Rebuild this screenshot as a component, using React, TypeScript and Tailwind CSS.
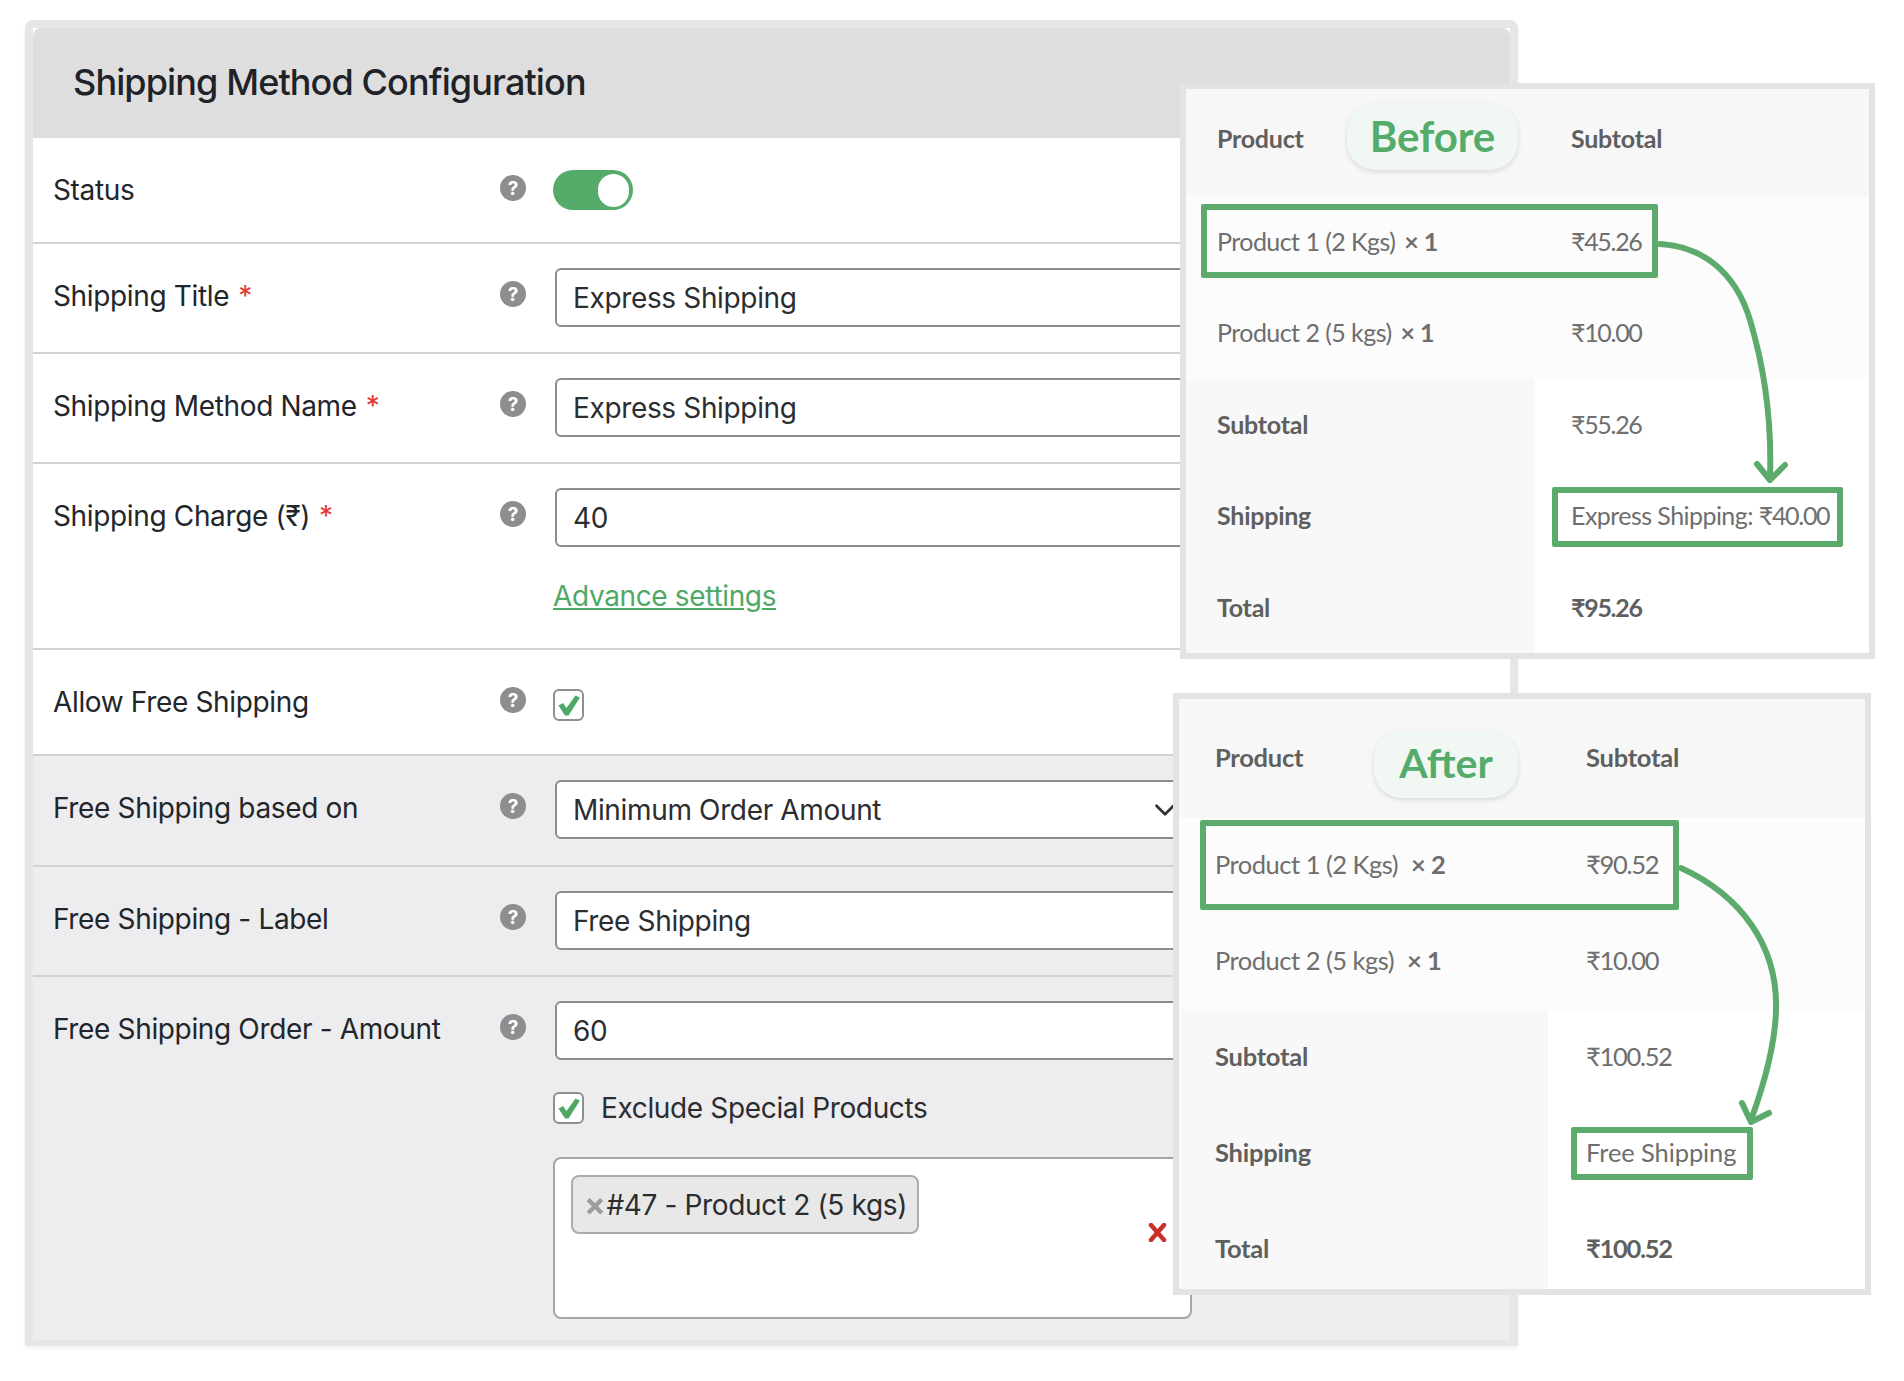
import { ChevronDown } from "lucide-react";

const HEAD_FONT = "font-['Inter','Noto_Sans',sans-serif]";
const CARD_FONT = "font-['Lato','Noto_Sans',sans-serif]";

function Help() {
  return (
    <span className="mt-[13px] flex h-[26px] w-[26px] items-center justify-center rounded-full bg-[#8e8e8e] text-[19px] leading-none font-bold text-white">
      ?
    </span>
  );
}

function Tick() {
  return (
    <svg viewBox="0 0 22 20" className="h-[21px] w-[22px]">
      <path d="M0.5 10 L5 7.5 L8.5 12.5 L17.5 0 L22 2 L10.5 20 L7 20 Z" fill="#4fa866" />
    </svg>
  );
}

function Checkbox({ className = "" }: { className?: string }) {
  return (
    <span className={`flex h-[32px] w-[31px] items-center justify-center rounded-[6px] border-2 border-[#8f8f8f] bg-white ${className}`}>
      <Tick />
    </span>
  );
}

function TextField({ value }: { value: string }) {
  return (
    <div className="ml-[2px] flex h-[59px] w-[637px] items-center rounded-[6px] border-2 border-[#8c8c8c] bg-white pl-[16px] text-[28px] tracking-[-0.35px] text-[#2b2d30]">
      {value}
    </div>
  );
}

function Row({
  label,
  required,
  gray,
  height,
  children,
}: {
  label: string;
  required?: boolean;
  gray?: boolean;
  height: string;
  children: React.ReactNode;
}) {
  return (
    <div className={`flex border-b-2 border-[#d2d2d2] pt-[24px] pl-[20px] ${height} ${gray ? "bg-[#edecee]" : "bg-white"}`}>
      <div className="mt-[8px] w-[447px] text-[28px] leading-[40px] tracking-[-0.35px] text-[#22262b]">
        {label}
        {required && <span className="ml-[9px] text-[#e53935]">*</span>}
      </div>
      <div className="w-[53px]">
        <Help />
      </div>
      <div>{children}</div>
    </div>
  );
}

function Cell({ children, bold, className = "" }: { children: React.ReactNode; bold?: boolean; className?: string }) {
  return <span className={`${bold ? "font-bold tracking-[-0.25px] text-[#5f5f5f]" : "text-[#6e6e6e]"} ${className}`}>{children}</span>;
}

function Price({ children }: { children: React.ReactNode }) {
  return <span className="tracking-[-1.3px]">{children}</span>;
}

function BeforeCard() {
  const rowCls = "flex h-[91.4px] items-center";
  return (
    <div className={`absolute top-[83px] left-[1180px] h-[576px] w-[695px] overflow-hidden border-[6px] border-[#e3e3e3] bg-white text-[25px] tracking-[-0.55px] ${CARD_FONT}`}>
      <div className="flex h-[107px] items-start bg-[#f7f7f7] pt-[31px]">
        <Cell bold className="w-[355px] pl-[31px]">Product</Cell>
        <Cell bold className="pl-[30px]">Subtotal</Cell>
      </div>
      <div className={`${rowCls} bg-[#fcfcfc]`}>
        <Cell className="w-[355px] pl-[31px]">Product 1 (2 Kgs) <b className="ml-[3px]">× 1</b></Cell>
        <Cell className="pl-[30px]"><Price>₹45.26</Price></Cell>
      </div>
      <div className={`${rowCls} bg-[#fcfcfc]`}>
        <Cell className="w-[355px] pl-[31px]">Product 2 (5 kgs) <b className="ml-[3px]">× 1</b></Cell>
        <Cell className="pl-[30px]"><Price>₹10.00</Price></Cell>
      </div>
      {[
        { name: "Subtotal", value: <Price>₹55.26</Price>, strong: false },
        { name: "Shipping", value: <>Express Shipping: <Price>₹40.00</Price></>, strong: false },
        { name: "Total", value: <Price>₹95.26</Price>, strong: true },
      ].map((row) => (
        <div key={row.name} className="flex h-[91.4px]">
          <div className="flex w-[349px] items-center bg-[#f8f8f8] pl-[31px]">
            <Cell bold>{row.name}</Cell>
          </div>
          <div className="flex items-center pl-[36px]">
            <Cell bold={row.strong}>{row.value}</Cell>
          </div>
        </div>
      ))}

      <div className="absolute top-[14px] left-[161px] flex h-[67px] w-[171px] items-center justify-center rounded-[28px] bg-[#f1f8f3] text-[42px] font-bold tracking-[0px] text-[#55ab6a] shadow-[0_2px_5px_rgba(0,0,0,0.12)]">
        Before
      </div>
      <div className="absolute top-[115px] left-[15px] h-[74px] w-[457px] rounded-[2px] border-[6px] border-[#5dab6c]" />
      <div className="absolute top-[398px] left-[366px] h-[60px] w-[291px] rounded-[2px] border-[6px] border-[#5dab6c]" />
      <svg viewBox="1186 89 683 564" className="absolute top-0 left-0 h-[564px] w-[683px]" fill="none" stroke="#5dab6c" strokeWidth="6" strokeLinecap="round" strokeLinejoin="round">
        <path d="M1660 244 C1700 246 1735 270 1750 320 C1765 370 1772 420 1770 478" />
        <path d="M1757 464 L1770 480 L1785 465" />
      </svg>
    </div>
  );
}

function AfterCard() {
  return (
    <div className={`absolute top-[693px] left-[1173px] h-[602px] w-[698px] overflow-hidden border-[6px] border-[#e3e3e3] bg-white text-[25.5px] tracking-[-0.5px] ${CARD_FONT}`}>
      <div className="flex h-[119px] items-start bg-[#f7f7f7] pt-[39px]">
        <Cell bold className="w-[407px] pl-[36px]">Product</Cell>
        <Cell bold>Subtotal</Cell>
      </div>
      <div className="flex h-[96px] items-center bg-[#fcfcfc] pb-[4px]">
        <Cell className="w-[407px] pl-[36px]">Product 1 (2 Kgs) <b className="ml-[7px]">× 2</b></Cell>
        <Cell><Price>₹90.52</Price></Cell>
      </div>
      <div className="flex h-[96px] items-center bg-[#fcfcfc] pb-[4px]">
        <Cell className="w-[407px] pl-[36px]">Product 2 (5 kgs) <b className="ml-[7px]">× 1</b></Cell>
        <Cell><Price>₹10.00</Price></Cell>
      </div>
      {[
        { name: "Subtotal", value: <Price>₹100.52</Price>, strong: false },
        { name: "Shipping", value: <span className="tracking-[-0.1px]">Free Shipping</span>, strong: false },
        { name: "Total", value: <Price>₹100.52</Price>, strong: true },
      ].map((row) => (
        <div key={row.name} className="flex h-[96px]">
          <div className="flex w-[369px] items-center bg-[#f8f8f8] pb-[4px] pl-[36px]">
            <Cell bold>{row.name}</Cell>
          </div>
          <div className="flex items-center pb-[4px] pl-[38px]">
            <Cell bold={row.strong}>{row.value}</Cell>
          </div>
        </div>
      ))}

      <div className="absolute top-[32px] left-[195px] flex h-[67px] w-[144px] items-center justify-center rounded-[28px] bg-[#f1f8f3] pb-[4px] text-[41px] font-bold tracking-[0px] text-[#55ab6a] shadow-[0_2px_5px_rgba(0,0,0,0.12)]">
        After
      </div>
      <div className="absolute top-[121px] left-[21px] h-[90px] w-[479px] rounded-[2px] border-[6px] border-[#5dab6c]" />
      <div className="absolute top-[428px] left-[392px] h-[53px] w-[182px] rounded-[2px] border-[6px] border-[#5dab6c]" />
      <svg viewBox="1179 699 686 590" className="absolute top-0 left-0 h-[590px] w-[686px]" fill="none" stroke="#5dab6c" strokeWidth="6" strokeLinecap="round" strokeLinejoin="round">
        <path d="M1681 868 C1740 895 1778 945 1776 1010 C1775 1050 1762 1090 1751 1120" />
        <path d="M1742 1103 L1751 1122 L1769 1113" />
      </svg>
    </div>
  );
}

export default function App() {
  return (
    <div className={`relative h-[1381px] w-[1904px] overflow-hidden bg-white pt-[20px] pl-[25px] ${HEAD_FONT}`}>
      <div className="h-[1326px] w-[1493px] rounded-t-[8px] border-x-[8px] border-t-[8px] border-b-[6px] border-[#e6e6e6] shadow-[0_2px_4px_rgba(0,0,0,0.06)]">
        <div className="flex h-[110px] items-center rounded-t-[8px] bg-[#dedede] pb-[2px] pl-[40px] text-[36px] font-medium tracking-[-0.88px] text-[#1f2328]">
          Shipping Method Configuration
        </div>
        <Row label="Status" height="h-[106px]">
          <div className="mt-[8px] flex h-[40px] w-[80px] items-center justify-end rounded-full bg-[#55ab6a] pr-[4px]">
            <span className="h-[33px] w-[31px] rounded-full bg-white" />
          </div>
        </Row>
        <Row label="Shipping Title" required height="h-[110px]">
          <TextField value="Express Shipping" />
        </Row>
        <Row label="Shipping Method Name" required height="h-[110px]">
          <TextField value="Express Shipping" />
        </Row>
        <Row label="Shipping Charge (₹)" required height="h-[186px]">
          <TextField value="40" />
          <a href="#" className="mt-[32px] block text-[28px] leading-[34px] tracking-[-0.35px] text-[#4fa866] underline">
            Advance settings
          </a>
        </Row>
        <Row label="Allow Free Shipping" height="h-[106px]">
          <Checkbox className="mt-[15px]" />
        </Row>
        <Row label="Free Shipping based on" gray height="h-[111px]">
          <div className="ml-[2px] flex h-[59px] w-[637px] items-center justify-between rounded-[6px] border-2 border-[#8c8c8c] bg-white pr-[8px] pl-[16px] text-[28px] tracking-[-0.35px] text-[#2b2d30]">
            Minimum Order Amount
            <ChevronDown size={34} strokeWidth={1.9} className="text-[#333]" />
          </div>
        </Row>
        <Row label="Free Shipping - Label" gray height="h-[110px]">
          <TextField value="Free Shipping" />
        </Row>
        <div className="flex h-[363px] bg-[#edecee] pt-[24px] pl-[20px]">
          <div className="mt-[8px] w-[447px] text-[28px] leading-[40px] tracking-[-0.35px] text-[#22262b]">Free Shipping Order - Amount</div>
          <div className="w-[53px]">
            <Help />
          </div>
          <div>
            <TextField value="60" />
            <div className="mt-[32px] flex items-center gap-[17px] text-[28px] leading-[32px] tracking-[-0.35px] text-[#2b2d30]">
              <Checkbox />
              Exclude Special Products
            </div>
            <div className="relative mt-[33px] h-[162px] w-[639px] rounded-[8px] border-2 border-[#a5a5a5] bg-white pt-[16px] pl-[16px]">
              <div className="flex h-[59px] w-[348px] items-center rounded-[8px] border-2 border-[#ababab] bg-[#e8e8e8] pl-[11px] text-[28px] tracking-[-0.35px] text-[#2b2d30]">
                <span className="mr-[1px] text-[32px] leading-none font-bold text-[#9c9c9c]">×</span>#47 - Product 2 (5 kgs)
              </div>
              <svg viewBox="0 0 19 19" className="absolute top-[64px] left-[593px] h-[19px] w-[19px]" stroke="#c9302c" strokeWidth="4.5" strokeLinecap="round">
                <path d="M3 2 L16 17 M16 2 L3 17" />
              </svg>
            </div>
          </div>
        </div>
      </div>
      <BeforeCard />
      <AfterCard />
    </div>
  );
}
